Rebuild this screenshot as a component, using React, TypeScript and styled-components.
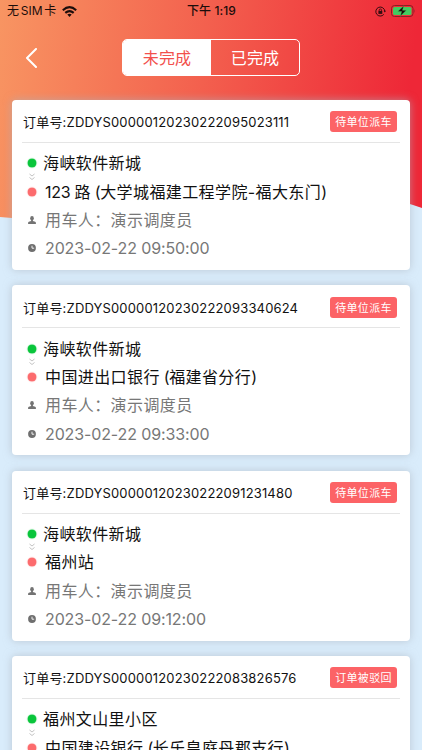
import React from 'react';
import styled, { createGlobalStyle } from 'styled-components';

const GlobalStyle = createGlobalStyle`
  * { box-sizing: border-box; }
  body {
    margin: 0;
    overflow: hidden;
    background: #d9ecfb;
    font-family: Inter, "Noto Sans CJK SC", sans-serif;
  }
`;

const Screen = styled.div`
  position: relative;
  height: 750px;
  overflow: hidden;
  background: #d9ecfb;
`;

const Backdrop = styled.svg`
  position: absolute;
  top: 0;
  left: 0;
`;

const Content = styled.div`
  position: relative;
`;

const StatusBar = styled.header`
  display: grid;
  grid-template-columns: 1fr auto 1fr;
  align-items: center;
  height: 22px;
  padding: 0 6px 0 7px;
  font-size: 12px;
  line-height: 22px;
  color: #1c0d0b;
`;

const Carrier = styled.div`
  display: flex;
  align-items: center;
  gap: 6px;
`;

const CarrierName = styled.span`
  word-spacing: -1.6px;
`;

const Clock = styled.div`
  font-weight: 500;
  letter-spacing: 0.1px;
  white-space: pre;
`;

const Indicators = styled.div`
  display: flex;
  align-items: center;
  justify-content: flex-end;
  gap: 5px;
`;

const NavBar = styled.nav`
  display: grid;
  grid-template-columns: 122px 178px;
  align-items: center;
  height: 70px;
  margin-top: 1px;
`;

const BackButton = styled.button`
  display: flex;
  width: 32px;
  margin: -1px 0 0 16px;
  padding: 0 0 0 9px;
  border: 0;
  background: none;
`;

const Tabs = styled.div`
  display: flex;
  height: 37px;
  border: 1px solid #fff;
  border-radius: 5px;
  overflow: hidden;
  margin-top: -2px;
`;

const Tab = styled.button<{ $active?: boolean }>`
  flex: 1;
  padding: 0 0 1px;
  border: 0;
  background: ${p => (p.$active ? '#fff' : 'transparent')};
  color: ${p => (p.$active ? '#f2504c' : '#fff')};
  font: 400 16px "Noto Sans CJK SC", sans-serif;
  letter-spacing: 0.2px;
`;

const OrderList = styled.main`
  display: flex;
  flex-direction: column;
  gap: 15.4px;
  padding: 6.8px 12px 0;
`;

const Card = styled.article`
  height: 170px;
  padding: 0 10px;
  border-radius: 4px;
  background: #fff;
  box-shadow: 0 0 8px rgba(170, 180, 190, 0.65);
`;

const CardHeader = styled.div`
  display: flex;
  align-items: center;
  justify-content: space-between;
  height: 43px;
  padding: 2px 3px 0 1px;
  border-bottom: 1px solid #e5e5e5;
`;

const OrderNumber = styled.div`
  display: flex;
  padding-top: 1px;
  font-size: 13px;
  line-height: 20px;
  letter-spacing: 0.2px;
  color: #111;
  white-space: nowrap;
`;

const Digits = styled.span`
  letter-spacing: 0.16px;
`;

const Status = styled.div`
  width: 67px;
  height: 21px;
  border-radius: 3px;
  background: #fc6366;
  color: #fff;
  font-size: 11px;
  line-height: 22px;
  letter-spacing: 0.35px;
  text-align: center;
`;

const Details = styled.div`
  display: grid;
  grid-template-columns: 21px 1fr;
  grid-auto-rows: 28.4px;
  align-items: center;
  padding-top: 6.2px;
`;

const Marker = styled.div`
  display: flex;
  flex-direction: column;
  align-items: center;
  width: 20px;
`;

const Line = styled.div<{ $muted?: boolean; $start?: boolean }>`
  padding-left: ${p => (p.$start ? 0 : 2)}px;
  font-size: 16px;
  line-height: 28px;
  letter-spacing: 0.4px;
  white-space: pre;
  color: ${p => (p.$muted ? '#777' : '#111')};
`;

const Latin = styled.span<{ $spacing: number }>`
  letter-spacing: ${p => p.$spacing}px;
`;

const Dot = styled.i<{ $color: string }>`
  width: 8px;
  height: 8px;
  border-radius: 50%;
  background: ${p => p.$color};
  box-shadow: 0 0 1px 0.5px ${p => p.$color};
`;

const RouteArrows = styled.svg`
  display: block;
  height: 8px;
  margin: -15px 0 7px;
`;

type Order = { id: string; status: string; from: string; to: React.ReactNode; time: string };

const orders: Order[] = [
  {
    id: 'ZDDYS00000120230222095023111', status: '待单位派车', from: '海峡软件新城',
    to: <><Latin $spacing={-0.3}>123 </Latin>路<Latin $spacing={-0.5}> (</Latin>大学城福建工程学院-福大东门)</>,
    time: '2023-02-22 09:50:00',
  },
  {
    id: 'ZDDYS00000120230222093340624', status: '待单位派车', from: '海峡软件新城',
    to: <>中国进出口银行<Latin $spacing={-0.5}> (</Latin>福建省分行)</>, time: '2023-02-22 09:33:00',
  },
  {
    id: 'ZDDYS00000120230222091231480', status: '待单位派车', from: '海峡软件新城',
    to: '福州站', time: '2023-02-22 09:12:00',
  },
  {
    id: 'ZDDYS00000120230222083826576', status: '订单被驳回', from: '福州文山里小区',
    to: <>中国建设银行<Latin $spacing={-0.5}> (</Latin>长乐皇庭丹郡支行)</>, time: '2023-02-22 08:38:00',
  },
];

function OrderCard({ order }: { order: Order }) {
  return (
    <Card>
      <CardHeader>
        <OrderNumber>订单号:<Digits>{order.id}</Digits></OrderNumber>
        <Status>{order.status}</Status>
      </CardHeader>
      <Details>
        <Marker>
          <Dot $color="#09c53b" />
        </Marker>
        <Line $start>{order.from}</Line>
        <Marker>
          <RouteArrows width="6" height="8" viewBox="0 0 6 8" fill="none" stroke="#bcbcbc" strokeWidth=".9">
            <path d="M.5 1 3 3 5.500 1M.5 4.500 3 6.500 5.500 4.500" />
          </RouteArrows>
          <Dot $color="#fc6b6d" />
        </Marker>
        <Line>{order.to}</Line>
        <Marker>
          <svg width="8" height="8" viewBox="0 0 8 8" fill="#737373">
            <ellipse cx="4" cy="2.2" rx="1.8" ry="2.2" />
            <path d="M3.1 3.5h1.8v1.4l2.3.8q.7.3.7 1V8H.1V6.700q0-.7.7-1l2.300-.8z" />
          </svg>
        </Marker>
        <Line $muted>用车人：演示调度员</Line>
        <Marker>
          <svg width="8" height="8" viewBox="0 0 8 8">
            <circle cx="4" cy="4" r="3.900" fill="#6f6f6f" />
            <path d="M4 1.700V4.200H6.200" fill="none" stroke="#fff" strokeWidth=".9" />
          </svg>
        </Marker>
        <Line $muted><Latin $spacing={-0.12}>{order.time}</Latin></Line>
      </Details>
    </Card>
  );
}

export default function App() {
  return (
    <Screen>
      <GlobalStyle />
      <Backdrop width="422" height="240" viewBox="0 0 422 240">
        <defs>
          <linearGradient id="sunset" gradientUnits="userSpaceOnUse" x1="0" y1="0" x2="415" y2="50">
            <stop offset="0" stopColor="#f89562" />
            <stop offset=".5" stopColor="#f3604e" />
            <stop offset="1" stopColor="#ee2737" />
          </linearGradient>
        </defs>
        <path d="M0 0H422V208Q405 202 390 199Q200 225 12 218L0 217Z" fill="url(#sunset)" />
      </Backdrop>
      <Content>
        <StatusBar>
          <Carrier>
            <CarrierName>无 SIM 卡</CarrierName>
            <svg width="15" height="11" viewBox="0 0 15 11" fill="none" stroke="#1c0d0b" strokeWidth="2.100">
              <path d="M.8 4.200Q7.500-1.800 14.200 4.200" />
              <path d="M3.300 6.900Q7.500 3.200 11.700 6.900" />
              <path d="M5.300 8.600Q7.500 6.800 9.700 8.600L7.500 11Z" fill="#1c0d0b" stroke="none" />
            </svg>
          </Carrier>
          <Clock>下午 1:19</Clock>
          <Indicators>
            <svg width="11" height="11" viewBox="0 0 11 11" fill="none" stroke="#350c10" strokeWidth="1">
              <path d="M8.800 8.400A4.500 4.500 0 1 1 9.800 5.200" />
              <path d="M8.500 4.700H11L9.800 6.500Z" fill="#350c10" stroke="none" />
              <rect x="3.400" y="4.900" width="3.900" height="3" fill="#350c10" stroke="none" />
              <path d="M4.200 5V4.100a1.150 1.150 0 0 1 2.300 0V5" strokeWidth=".8" />
            </svg>
            <svg width="25" height="12" viewBox="0 0 25 12">
              <rect x=".5" y=".5" width="21.500" height="11" rx="3" fill="none" stroke="#8c1d24" />
              <rect x="2" y="2" width="18.500" height="8" rx="1.500" fill="#43cb60" />
              <path d="M23.300 4q1.200 2 0 4z" fill="#8c1d24" />
              <path d="M12.800.8 6.800 6.500h3.800L9.300 11.200l6-5.900h-3.800z" fill="#170808" stroke="#43cb60" strokeWidth=".4" />
            </svg>
          </Indicators>
        </StatusBar>
        <NavBar>
          <BackButton aria-label="返回">
            <svg width="14" height="20" viewBox="0 0 14 20" fill="none" stroke="#fff" strokeWidth="2" strokeLinecap="round" strokeLinejoin="round">
              <path d="M11 1 2 10l9 9" />
            </svg>
          </BackButton>
          <Tabs>
            <Tab $active>未完成</Tab>
            <Tab>已完成</Tab>
          </Tabs>
        </NavBar>
        <OrderList>
          {orders.map(order => <OrderCard key={order.id} order={order} />)}
        </OrderList>
      </Content>
    </Screen>
  );
}
